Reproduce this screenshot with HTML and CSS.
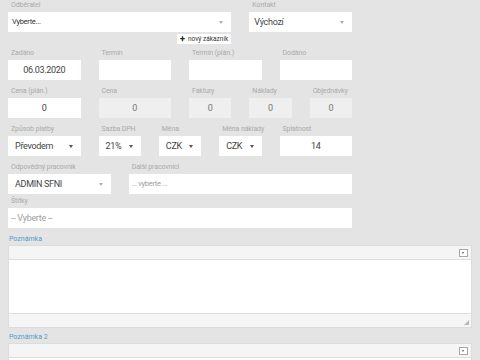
FILE: index.html
```html
<!DOCTYPE html>
<html lang="cs">
<head>
<meta charset="UTF-8">
<title>Zakázka</title>
<link rel="stylesheet" href="styles.css">
</head>
<body>
<div class="page">
    <div class="form-grid">
        <div class="field span-8">
            <label>Odběratel</label>
            <div class="select small">Vyberte...<span class="caret light"></span></div>
            <div class="new-customer"><button class="btn-new"><span class="plus">+</span> nový zákazník</button></div>
        </div>
        <div class="field span-4">
            <label>Kontakt</label>
            <div class="select">Výchozí<span class="caret light"></span></div>
        </div>

        <div class="field span-3"><label>Zadáno</label><div class="input center">06.03.2020</div></div>
        <div class="field span-3"><label>Termín</label><div class="input"></div></div>
        <div class="field span-3"><label>Termín (plán.)</label><div class="input"></div></div>
        <div class="field span-3"><label>Dodáno</label><div class="input"></div></div>

        <div class="field span-3"><label>Cena (plán.)</label><div class="input center">0</div></div>
        <div class="field span-3"><label>Cena</label><div class="input center disabled">0</div></div>
        <div class="field span-2"><label>Faktury</label><div class="input center disabled">0</div></div>
        <div class="field span-2"><label>Náklady</label><div class="input center disabled">0</div></div>
        <div class="field span-2"><label>Objednávky</label><div class="input center disabled">0</div></div>

        <div class="field span-3"><label>Způsob platby</label><div class="select pad">Převodem<span class="caret"></span></div></div>
        <div class="field span-2"><label>Sazba DPH</label><div class="select pad">21%<span class="caret"></span></div></div>
        <div class="field span-2"><label>Měna</label><div class="select pad">CZK<span class="caret"></span></div></div>
        <div class="field span-2"><label>Měna náklady</label><div class="select pad">CZK<span class="caret"></span></div></div>
        <div class="field span-3"><label>Splatnost</label><div class="input center">14</div></div>

        <div class="field span-4"><label>Odpovědný pracovník</label><div class="select pad">ADMIN SFNI<span class="caret light"></span></div></div>
        <div class="field span-8"><label>Další pracovníci</label><div class="input placeholder small">... vyberte ...</div></div>
    </div>

    <div class="field tags">
        <label>Štítky</label>
        <div class="input placeholder">-- Vyberte --</div>
    </div>

    <div class="note">
        <label class="note-label">Poznámka</label>
        <div class="editor">
            <div class="toolbar"><span class="tb-btn"></span></div>
            <div class="editor-body"></div>
            <div class="editor-foot"><span class="grip"></span></div>
        </div>
    </div>

    <div class="note">
        <label class="note-label">Poznámka 2</label>
        <div class="editor">
            <div class="toolbar"><span class="tb-btn"></span></div>
            <div class="editor-body"></div>
        </div>
    </div>
</div>
</body>
</html>
```

FILE: styles.css
```css
body {
    margin: 0;
    background-color: #e4e4e4;
    font-family: Roboto, "Liberation Sans", sans-serif;
    color: #444444;
    overflow: hidden;
}
.page {
    padding: 0 8px;
}
.form-grid {
    width: 344px;
    display: grid;
    grid-template-columns: repeat(12, 1fr);
    column-gap: 18px;
    row-gap: 6px;
}
.span-2 { grid-column: span 2; }
.span-3 { grid-column: span 3; }
.span-4 { grid-column: span 4; }
.span-8 { grid-column: span 8; }

.field label {
    display: block;
    height: 10px;
    line-height: 10px;
    margin: 0 0 2px 3px;
    font-size: 7px;
    letter-spacing: -0.1px;
    color: #aaaaaa;
    white-space: nowrap;
}
.input,
.select {
    position: relative;
    height: 20px;
    line-height: 20px;
    background-color: #ffffff;
    font-size: 9px;
    letter-spacing: -0.3px;
    color: #444444;
    padding: 0 5px;
    box-sizing: border-box;
    white-space: nowrap;
    overflow: hidden;
}
.input.center {
    text-align: center;
}
.input.disabled {
    background-color: #efefef;
    color: #777777;
}
.input.placeholder {
    color: #9e9e9e;
    padding-left: 3px;
}
.small {
    font-size: 7.5px;
}
.select.small {
    padding-left: 4px;
    color: #333333;
}
.select.pad {
    padding-left: 7px;
}
.caret {
    position: absolute;
    right: 8px;
    top: 9px;
    width: 0;
    height: 0;
    border-left: 2px solid transparent;
    border-right: 2px solid transparent;
    border-top: 3px solid #555555;
}
.caret.light {
    border-top-color: #b0b0b0;
    border-left-width: 2.5px;
    border-right-width: 2.5px;
}

.new-customer {
    display: flex;
    justify-content: flex-end;
    margin: 2px 0 -2px 0;
}
.btn-new {
    height: 10px;
    padding: 0 3px;
    border: none;
    background-color: #ffffff;
    font-family: inherit;
    font-size: 6.5px;
    line-height: 10px;
    color: #333333;
    display: flex;
    align-items: center;
    gap: 3px;
}
.plus {
    font-weight: bold;
    font-size: 9px;
    color: #222222;
}

.tags {
    width: 344px;
    margin-top: 2px;
}

.note {
    margin-top: 6px;
}
.note + .note {
    margin-top: 4px;
}
.note-label {
    display: block;
    height: 10px;
    line-height: 10px;
    margin: 0 0 1px 1px;
    font-size: 7px;
    color: #4d9dcc;
}
.editor {
    width: 464px;
    border: 1px solid #dcdcdc;
    box-sizing: border-box;
    background-color: #ffffff;
}
.toolbar {
    height: 13px;
    background-color: #f5f5f5;
    border-bottom: 1px solid #dddddd;
    display: flex;
    justify-content: flex-end;
    align-items: center;
    padding-right: 3px;
}
.tb-btn {
    position: relative;
    width: 7px;
    height: 6px;
    border: 1px solid #a8a8a8;
    background-color: #ffffff;
}
.tb-btn::after {
    content: "";
    position: absolute;
    left: 2px;
    top: 2px;
    border-left: 1.5px solid transparent;
    border-right: 1.5px solid transparent;
    border-top: 2px solid #555555;
}
.editor-body {
    height: 53px;
    background-color: #ffffff;
}
.editor-foot {
    height: 13px;
    background-color: #f5f5f5;
    border-top: 1px solid #dddddd;
    position: relative;
}
.grip {
    position: absolute;
    right: 2px;
    bottom: 2px;
    width: 0;
    height: 0;
    border-left: 5px solid transparent;
    border-bottom: 5px solid #b8b8b8;
}
```
